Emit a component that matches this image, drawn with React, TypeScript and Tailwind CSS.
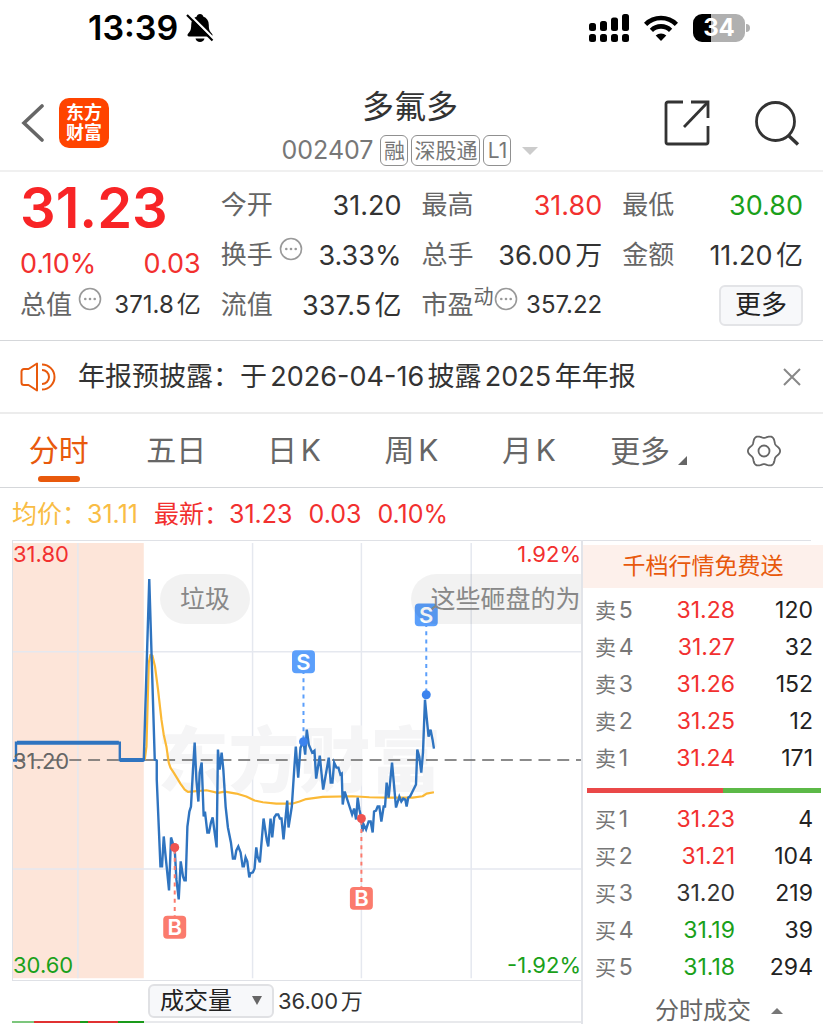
import React, { useState } from 'react';
import clsx from 'clsx';

interface Level {
  label: string;
  level: number;
  price: string;
  volume: number;
  color: string;
}

interface Marker {
  type: 'S' | 'B';
  x: number;
  y: number;
  boxY: number;
}

const RED = 'text-[#f2302f]';
const GREEN = 'text-[#1aa01a]';
const DARK = 'text-[#333333]';

const sellLevels: Level[] = [
  { label: '卖', level: 5, price: '31.28', volume: 120, color: RED },
  { label: '卖', level: 4, price: '31.27', volume: 32, color: RED },
  { label: '卖', level: 3, price: '31.26', volume: 152, color: RED },
  { label: '卖', level: 2, price: '31.25', volume: 12, color: RED },
  { label: '卖', level: 1, price: '31.24', volume: 171, color: RED }
];

const buyLevels: Level[] = [
  { label: '买', level: 1, price: '31.23', volume: 4, color: RED },
  { label: '买', level: 2, price: '31.21', volume: 104, color: RED },
  { label: '买', level: 3, price: '31.20', volume: 219, color: DARK },
  { label: '买', level: 4, price: '31.19', volume: 39, color: GREEN },
  { label: '买', level: 5, price: '31.18', volume: 294, color: GREEN }
];

const tabs = ['分时', '五日', '日K', '周K', '月K'];

const markers: Marker[] = [
  { type: 'S', x: 304, y: 742, boxY: 662 },
  { type: 'S', x: 427, y: 695, boxY: 615 },
  { type: 'B', x: 175, y: 848, boxY: 928 },
  { type: 'B', x: 362, y: 819, boxY: 899 }
];

const pricePoints =
  '13,761 16,761 16,743 120,743 120,760.5 144,760.5 149.5,579 155,760 157,761 157,780 160.7,867 162.3,867 164,837 165.7,855 169.3,891 171.3,838 175,850 176.7,880 179,900 181,862 183.3,877 184.7,881 186,881 187.7,827 189.7,812 191.3,807 193.3,770 195,743 196.7,780 198.7,802 200,773 202,763 204,817 205.3,812 207.7,833 209.3,833 211.3,823 213,818 217,848 218.3,750 220,770 222,753 223.7,770 226,807 228.3,828 231.3,843 233.3,859 235.3,859 236.7,851 238.7,847 241,853 243,867 244.3,867 246,858 247.7,862 249.7,878 250.7,874 253.3,873 255,869 256.7,848 258,857 260.3,863 264,819 267.3,841 268.7,847 271,819 272.7,838 274.7,818 276.7,815 278.7,815 280.3,819 282,819 284,840 287.7,801 289,828 292.3,807 294.7,770 296.3,747 298.7,778 301,748 304,742 305.7,755 307.3,730 309.3,745 312.7,753 315,751 316.7,779 320.3,756 323.7,790 326.7,773 329.3,758 331.3,783 333,783 334.7,763 337,768 339,768 341,775 342.3,774 343.3,805 345.3,792 352.7,815 354.7,809 356.7,820 358.3,798 360,810 362,819 363,832 364.3,825 366.7,830 369.3,822 371.3,822 373.3,833 374.7,812 376.7,811 378.3,807 380,807 382,822 384.3,807 385.7,807 387.3,783 389.3,798 392.7,763 396.7,808 400,797 402,802 404,799 406,800 407.3,807 409,798 410.7,797 416.7,785 418,750 420,757 422,773 423.7,753 425.7,700 427.3,717 429.3,737 431.3,730 433.3,740 434.7,749';

const averagePoints =
  '145,760 146.7,747 149,663 150.7,655 152.7,656 155.3,667 158.3,690 161.7,720 164,735 166.7,747 169,763 170.7,768 174,773 178.3,780 180.7,784 185,790 188.3,792.3 206.7,790.7 218.3,793.3 225,792 236.7,794 246.7,797 255,801 263.3,802.7 276.7,804 293.3,804 300,802 306.7,799.5 323.3,797.3 353.3,796.7 370,797.7 390,798 413.3,798 423.3,796.7 427.3,794 434.7,792.7';

// Six soft lobes around the hub
const gearPath =
  Array.from({ length: 120 }, (_, i) => {
    const a = (i / 120) * Math.PI * 2;
    const r = 14.6 + 1.5 * Math.cos(6 * a);
    return `${i ? 'L' : 'M'}${(17 + r * Math.cos(a)).toFixed(2)} ${(17 + r * Math.sin(a)).toFixed(2)}`;
  }).join('') + 'Z';

const MoreInfo = () => (
  <svg viewBox="0 0 24 24" className="w-6 h-6 mb-3 shrink-0" fill="none">
    <circle cx="12" cy="12" r="10.5" stroke="#999999" strokeWidth="1.6" />
    <circle cx="7.3" cy="12" r="1.3" fill="#999999" />
    <circle cx="12" cy="12" r="1.3" fill="#999999" />
    <circle cx="16.7" cy="12" r="1.3" fill="#999999" />
  </svg>
);

const StatusBar = () => (
  <div className="flex items-center justify-between h-14 pl-[88px] pr-[73px] text-black">
    <div className="flex items-center gap-2">
      <span className="text-[34px] leading-none font-semibold">13:39</span>
      <svg viewBox="0 0 28 30" className="w-7 h-[30px]">
        <path
          d="M14 1c1.8 0 3 1.1 3.2 2.5 3.7 1.3 5.6 4.4 5.6 8.5 0 5 1.2 6.700 3 8.500 1.300 1.300.8 3-1 3H3.200c-1.800 0-2.300-1.700-1-3 1.800-1.800 3-3.500 3-8.500 0-4.100 1.900-7.200 5.600-8.500C11 2.100 12.200 1 14 1Z"
          fill="black"
        />
        <path d="M9.5 25.5h9c-.5 2.200-2.200 3.600-4.500 3.600s-4-1.400-4.500-3.600Z" fill="black" />
        <path d="M2.5 0.5 28 26" stroke="white" strokeWidth="2.4" />
        <path d="M1 2 26.5 27.5" stroke="black" strokeWidth="2.2" />
      </svg>
    </div>
    <div className="flex items-center gap-[15px]">
      <svg viewBox="0 0 40 28" className="w-10 h-7" fill="black">
        <rect x="0" y="9" width="7" height="8" rx="2.5" />
        <rect x="11" y="7" width="7" height="10" rx="2.5" />
        <rect x="22" y="3.5" width="7" height="13.5" rx="2.5" />
        <rect x="33" y="0" width="7" height="17" rx="2.5" />
        <rect x="0" y="20" width="7" height="8" rx="2.5" />
        <rect x="11" y="20" width="7" height="8" rx="2.5" />
        <rect x="22" y="20" width="7" height="8" rx="2.5" />
        <rect x="33" y="20" width="7" height="8" rx="2.5" />
      </svg>
      <svg viewBox="0 0 34 26" className="w-[34px] h-[26px]" fill="none" stroke="black" strokeWidth="4.6">
        <path d="M1.6 9.3a22 22 0 0 1 30.8 0" />
        <path d="M7.4 15.3a13.7 13.7 0 0 1 19.2 0" />
        <path d="M17 26l-5.3-5.4a7.5 7.5 0 0 1 10.6 0Z" fill="black" stroke="none" />
      </svg>
      <div className="flex items-center gap-px">
        <div className="flex items-center justify-center w-[52px] h-7 rounded-[9px] bg-linear-to-r from-black from-34% to-[#b0b0b0] to-34% text-2xl leading-none font-bold text-white">
          34
        </div>
        <div className="w-1 h-2 rounded-r-full bg-[#b0b0b0]" />
      </div>
    </div>
  </div>
);

const Header = () => (
  <header className="grid grid-cols-[1fr_auto_1fr] items-center pt-[23px] pb-1 pl-5 pr-[23px] border-b-2 border-[#f0f0f0]">
    <div className="flex items-center gap-[15px]">
      <button aria-label="返回">
        <svg viewBox="0 0 24 38" className="w-6 h-[38px]" fill="none" stroke="#666666" strokeWidth="3.6">
          <path d="M22 2 4 19l18 17" strokeLinecap="round" />
        </svg>
      </button>
      <div className="flex flex-col items-center justify-center w-[50px] h-[50px] rounded-[10px] bg-[#ff4400] text-lg leading-5 font-bold text-white">
        <span>东方</span>
        <span>财富</span>
      </div>
    </div>
    <div className="flex flex-col items-center gap-2 pt-2">
      <h1 className="text-[32px] leading-10 text-[#333333]">多氟多</h1>
      <div className="flex items-center gap-[3px] text-[#777777]">
        <span className="mr-1 text-[25px] leading-none">002407</span>
        {['融', '深股通', 'L1'].map((tag) => (
          <span
            key={tag}
            className="flex items-center justify-center min-w-7 h-[31px] px-[2px] border border-[#909090] rounded-md text-[21px] leading-none"
          >
            {tag}
          </span>
        ))}
        <svg viewBox="0 0 16 8" className="w-4 h-2 ml-2" fill="#cccccc">
          <path d="M0 0h16L8 8Z" />
        </svg>
      </div>
    </div>
    <div className="flex items-center justify-end gap-11">
      <button aria-label="分享">
        <svg viewBox="0 0 46 46" className="w-[46px] h-[46px]" fill="none" stroke="#333333" strokeWidth="2.8">
          <path d="M19 2H4a2 2 0 0 0-2 2v38a2 2 0 0 0 2 2h38a2 2 0 0 0 2-2V26" />
          <path d="M27 2h17v16" />
          <path d="M44 2 20 27" />
        </svg>
      </button>
      <button aria-label="搜索">
        <svg viewBox="0 0 46 46" className="w-[46px] h-[46px]" fill="none" stroke="#333333" strokeWidth="2.8">
          <circle cx="21.5" cy="21.5" r="19" />
          <path d="M34.5 35.5 44 44.5" strokeWidth="3.4" />
        </svg>
      </button>
    </div>
  </header>
);

const Stat: React.FC<{ label: React.ReactNode; value: string; color?: string }> = ({
  label,
  value,
  color = DARK
}) => (
  <div className="flex items-center justify-between h-[50px] whitespace-nowrap">
    <span className="flex items-center gap-[6px] text-[#666666]">{label}</span>
    <span className={clsx('text-[27px] leading-none', color)}>{value}</span>
  </div>
);

const Quote = () => (
  <section className="grid grid-cols-4 gap-5 px-5 pt-2 pb-[10px] border-b border-[#d5d7da] text-[26px] leading-none">
    <div className="whitespace-nowrap">
      <div className="flex items-center h-14 text-[56px] font-semibold text-[#f82426]">31.23</div>
      <div className={clsx('flex items-center justify-between h-[54px] text-[27px]', RED)}>
        <span>0.10%</span>
        <span>0.03</span>
      </div>
      <div className="flex items-center justify-between h-[30px]">
        <span className="flex items-center gap-[6px] text-[#666666]">
          总值
          <MoreInfo />
        </span>
        <span className={clsx('text-2xl leading-none', DARK)}>371.8亿</span>
      </div>
    </div>
    <div>
      <Stat label="今开" value="31.20" />
      <Stat label={<>换手<MoreInfo /></>} value="3.33%" />
      <Stat label="流值" value="337.5亿" />
    </div>
    <div>
      <Stat label="最高" value="31.80" color={RED} />
      <Stat label="总手" value="36.00万" />
      <div className="flex items-center justify-between h-[50px] whitespace-nowrap">
        <span className="flex items-center text-[#666666]">
          市盈
          <span className="mb-4 text-xl leading-none">动</span>
          <MoreInfo />
        </span>
        <span className={clsx('text-2xl leading-none', DARK)}>357.22</span>
      </div>
    </div>
    <div>
      <Stat label="最低" value="30.80" color={GREEN} />
      <Stat label="金额" value="11.20亿" />
      <div className="flex items-center justify-end h-[50px]">
        <button className="h-[41px] px-[14px] border-2 border-[#e3e4e7] rounded-md bg-[#f7f8fa] text-[#222222]">
          更多
        </button>
      </div>
    </div>
  </section>
);

const Notice = () => {
  const [open, setOpen] = useState(true);
  if (!open) return null;

  return (
    <section className="flex items-center h-[73px] pl-5 pr-[22px] border-b-2 border-[#ececec]">
      <svg viewBox="0 0 36 30" className="w-9 h-[30px]" fill="none" stroke="#e8590c" strokeWidth="2">
        <path d="M17 1.5v27L8.5 23H4a2.5 2.5 0 0 1-2.5-2.5v-11A2.5 2.5 0 0 1 4 7h4.5Z" strokeLinejoin="round" />
        <path d="M22 8a7 7 0 0 1 0 14" />
        <path d="M22 2.5a12.5 12.5 0 0 1 0 25" />
      </svg>
      <p className="ml-[22px] text-[27px] leading-none text-[#333333]">年报预披露：于2026-04-16披露2025年年报</p>
      <button aria-label="关闭" className="ml-auto" onClick={() => setOpen(false)}>
        <svg viewBox="0 0 18 18" className="w-[18px] h-[18px]" stroke="#888888" strokeWidth="2">
          <path d="M1 1l16 16M17 1 1 17" />
        </svg>
      </button>
    </section>
  );
};

const PeriodTabs = () => {
  const [active, setActive] = useState('分时');

  return (
    <nav className="grid grid-cols-7 h-[74px] border-b border-[#d5d7da] text-[30px] leading-none text-[#666666]">
      {tabs.map((tab) => (
        <button
          key={tab}
          onClick={() => setActive(tab)}
          className={clsx('flex flex-col items-center justify-end gap-[6px] pb-[5px]', active === tab && 'text-[#e8590c]')}
        >
          <span className="leading-10">{tab}</span>
          <span className={clsx('w-[42px] h-[6px] rounded-full', active === tab && 'bg-[#e8590c]')} />
        </button>
      ))}
      <button className="flex items-center justify-center gap-2 pl-1">
        更多
        <svg viewBox="0 0 9 9" className="w-[9px] h-[9px] mt-5" fill="#666666">
          <path d="M9 0v9H0Z" />
        </svg>
      </button>
      <button aria-label="设置" className="flex items-center justify-center">
        <svg viewBox="0 0 34 34" className="w-[34px] h-[34px]" fill="none" stroke="#666666" strokeWidth="1.8">
          <path d={gearPath} />
          <circle cx="17" cy="17" r="5.5" />
        </svg>
      </button>
    </nav>
  );
};

const TimeChart = () => (
  <div className="relative overflow-hidden border-y border-l border-[#dfe1e6] text-[22px] leading-none">
    <svg viewBox="13 541 569 440" className="block w-full h-auto" fill="none">
      <rect x="13" y="543" width="131" height="436" fill="#fde5d9" />
      <g stroke="#e5e8ef" strokeWidth="1.5">
        {[78, 253, 362, 472].map((x) => (
          <path key={x} d={`M${x} 543V979`} />
        ))}
        <path d="M13 652H582M13 869.5H582" />
      </g>
      <text x="158" y="786" fontSize="71" fontWeight="900" fill="#f5f5f6">
        东方财富
      </text>
      <path d="M13 760.5H582" stroke="#666666" strokeWidth="1.5" strokeDasharray="12 6.8" />
      <polyline points={averagePoints} stroke="#fbb936" strokeWidth="2.2" strokeLinejoin="round" />
      <polyline points={pricePoints} stroke="#2f74c0" strokeWidth="2.4" />
      <path d="M17 743H119M120 760.5H144" stroke="#2f74c0" strokeWidth="4" />
      {markers.map(({ type, x, y, boxY }) => {
        const color = type === 'S' ? '#5b9ffb' : '#fb7b6d';
        return (
          <g key={`${x}`}>
            <path d={`M${x} ${boxY}V${y}`} stroke={color} strokeWidth="2" strokeDasharray="4 4.2" />
            <circle cx={x} cy={y} r="4.5" fill={type === 'S' ? '#3c83ee' : '#ee5350'} />
            <rect x={x - 11.5} y={boxY - 11.5} width="23" height="23" rx="4" fill={color} />
            <text x={x} y={boxY + 8} fontSize="22" fontWeight="600" textAnchor="middle" fill="white">
              {type}
            </text>
          </g>
        );
      })}
    </svg>
    <span className={clsx('absolute left-0 top-[2px]', RED)}>31.80</span>
    <span className={clsx('absolute right-0 top-[2px]', RED)}>1.92%</span>
    <span className="absolute left-0 top-1/2 -translate-y-1/2 text-[#666666]">31.20</span>
    <span className={clsx('absolute left-0 bottom-1', GREEN)}>30.60</span>
    <span className={clsx('absolute right-0 bottom-1', GREEN)}>-1.92%</span>
    {/* Bullet comments */}
    <span className="absolute left-[147px] top-[33px] flex items-center h-[50px] px-5 rounded-full bg-black/5 text-[25px] text-[#888888]">
      垃圾
    </span>
    <span className="absolute left-[70%] right-0 top-[33px] flex items-center h-[50px] pl-5 rounded-l-full bg-black/5 text-[25px] whitespace-nowrap text-[#888888]">
      这些砸盘的为
    </span>
  </div>
);

const LevelTable: React.FC<{ levels: Level[] }> = ({ levels }) => (
  <table className="w-full text-[23px] leading-none">
    <tbody>
      {levels.map((row) => (
        <tr key={row.level} className="h-[37px]">
          <th scope="row" className="pl-3 text-left font-normal text-[#777777]">
            <span className="text-[21px]">{row.label}</span>
            {row.level}
          </th>
          <td className={clsx('w-[90px] text-right', row.color)}>{row.price}</td>
          <td className="w-[88px] pr-[10px] text-right text-[#222222]">{row.volume}</td>
        </tr>
      ))}
    </tbody>
  </table>
);

const OrderBook = () => (
  <aside className="w-[242px] shrink-0 border-l-2 border-[#e2e4e9]">
    <div className="mr-3 border-t border-[#dfe1e6]" />
    <a
      href="#level2"
      className="flex items-center justify-center h-[43px] mt-1 bg-[#fdf0eb] text-[23px] leading-none text-[#e8590c]"
    >
      千档行情免费送
    </a>
    <div className="pt-1">
      <LevelTable levels={sellLevels} />
    </div>
    <div className="flex h-[5px] mt-[11px] mb-2 ml-1 mr-[2px]">
      <div className="w-[58%] bg-[#ea4848]" />
      <div className="flex-1 bg-[#5cb947]" />
    </div>
    <LevelTable levels={buyLevels} />
    <button className="flex items-center justify-center gap-5 w-full mt-3 pl-8 text-2xl leading-[26px] text-[#666666]">
      分时成交
      <svg viewBox="0 0 12 6" className="w-3 h-[6px]" fill="#777777">
        <path d="M0 6h12L6 0Z" />
      </svg>
    </button>
  </aside>
);

const VolumeBar = () => (
  <div>
    <div className="flex items-center gap-1 h-10 pl-[136px] text-[22px] leading-none text-[#333333]">
      <div className="relative">
        <select
          aria-label="指标"
          className="block appearance-none w-[126px] h-[34px] pl-[10px] border-2 border-[#e0e1e4] rounded-md bg-[#f7f8fa] text-2xl leading-none text-[#222222]"
        >
          <option>成交量</option>
          <option>成交额</option>
        </select>
        <svg viewBox="0 0 10 9" className="absolute right-3 top-3 w-[10px] h-[9px] pointer-events-none" fill="#666666">
          <path d="M0 0h10L5 9Z" />
        </svg>
      </div>
      <span>36.00万</span>
    </div>
    <div className="flex h-[2px] bg-[#e8e9ec]">
      <div className="w-[22px] bg-[#7cc67c]" />
      <div className="w-[46px] bg-[#e03131]" />
      <div className="w-2 bg-[#1a9a1a]" />
      <div className="w-[30px] bg-[#e03131]" />
      <div className="w-[26px] bg-[#1a9a1a]" />
    </div>
  </div>
);

const App = () => {
  return (
    <main className="w-full bg-white font-['Inter','Noto_Sans_CJK_SC',sans-serif] [text-autospace:normal]">
      <StatusBar />
      <Header />
      <Quote />
      <Notice />
      <PeriodTabs />
      <div className="flex items-center gap-4 h-[52px] pl-3 text-[25px] leading-none whitespace-nowrap">
        <span className="text-[#f9bd45]">均价：31.11</span>
        <span className={RED}>最新：31.23</span>
        <span className={RED}>0.03</span>
        <span className={RED}>0.10%</span>
      </div>
      <div className="flex">
        <div className="flex-1 min-w-0 pl-3">
          <TimeChart />
          <VolumeBar />
        </div>
        <OrderBook />
      </div>
    </main>
  );
};

export default App;
